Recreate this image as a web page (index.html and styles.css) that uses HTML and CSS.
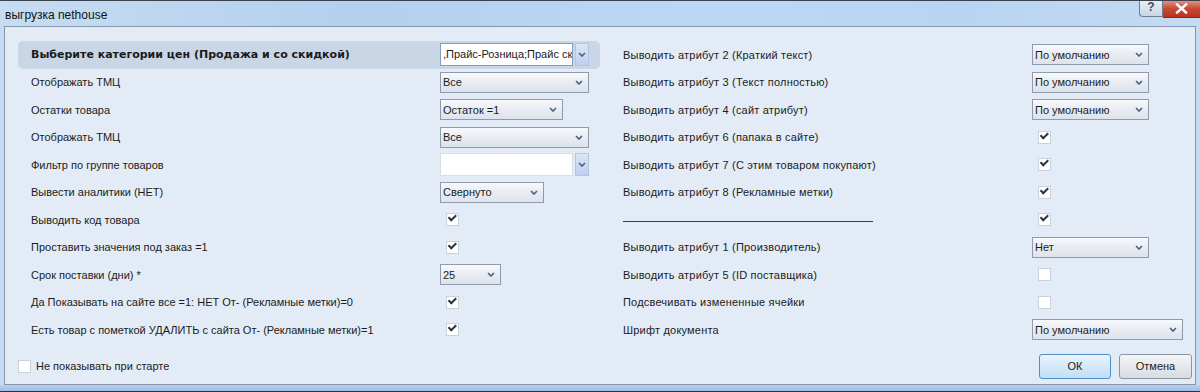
FILE: index.html
```html
<!DOCTYPE html>
<html lang="ru">
<head>
  <meta charset="UTF-8">
  <title>выгрузка nethouse</title>
  <link rel="stylesheet" href="styles.css">
</head>
<body>

<div class="window">
  <div class="titlebar">
    <span class="title">выгрузка nethouse</span>
    <div class="caption-btns">
      <div class="cap-help">?</div>
      <div class="cap-close">
        <svg width="13" height="11" viewBox="0 0 13 11"><path d="M2 1.5 L11 9.5 M11 1.5 L2 9.5" stroke="#fff" stroke-width="2.4" stroke-linecap="square"/></svg>
      </div>
    </div>
  </div>

  <div class="client">
    <div class="columns">
      <!-- левая колонка -->
      <div class="col col-left">
        <div class="row row-active">
          <span class="label bold">Выберите категории цен (Продажа и со скидкой)</span>
          <div class="combo-edit w149">
            <div class="edit">,Прайс-Розница;Прайс ск</div>
            <div class="drop"><svg width="8" height="5" viewBox="0 0 8 5"><path d="M1 1 L4 4 L7 1" fill="none" stroke="#4a5d82" stroke-width="1.6"/></svg></div>
          </div>
        </div>
        <div class="row">
          <span class="label">Отображать ТМЦ</span>
          <div class="select w149"><span>Все</span><svg width="8" height="5" viewBox="0 0 8 5"><path d="M1 1 L4 4 L7 1" fill="none" stroke="#4a5d82" stroke-width="1.6"/></svg></div>
        </div>
        <div class="row">
          <span class="label">Остатки товара</span>
          <div class="select w123"><span>Остаток =1</span><svg width="8" height="5" viewBox="0 0 8 5"><path d="M1 1 L4 4 L7 1" fill="none" stroke="#4a5d82" stroke-width="1.6"/></svg></div>
        </div>
        <div class="row">
          <span class="label">Отображать ТМЦ</span>
          <div class="select w149"><span>Все</span><svg width="8" height="5" viewBox="0 0 8 5"><path d="M1 1 L4 4 L7 1" fill="none" stroke="#4a5d82" stroke-width="1.6"/></svg></div>
        </div>
        <div class="row">
          <span class="label">Фильтр по группе товаров</span>
          <div class="combo-edit w149">
            <div class="edit plain"></div>
            <div class="drop"><svg width="8" height="5" viewBox="0 0 8 5"><path d="M1 1 L4 4 L7 1" fill="none" stroke="#4a5d82" stroke-width="1.6"/></svg></div>
          </div>
        </div>
        <div class="row">
          <span class="label">Вывести аналитики (НЕТ)</span>
          <div class="select w104"><span>Свернуто</span><svg width="8" height="5" viewBox="0 0 8 5"><path d="M1 1 L4 4 L7 1" fill="none" stroke="#4a5d82" stroke-width="1.6"/></svg></div>
        </div>
        <div class="row">
          <span class="label">Выводить код товара</span>
          <div class="check on"></div>
        </div>
        <div class="row">
          <span class="label">Проставить значения под заказ =1</span>
          <div class="check on"></div>
        </div>
        <div class="row">
          <span class="label">Срок поставки (дни) *</span>
          <div class="select w61"><span>25</span><svg width="8" height="5" viewBox="0 0 8 5"><path d="M1 1 L4 4 L7 1" fill="none" stroke="#4a5d82" stroke-width="1.6"/></svg></div>
        </div>
        <div class="row">
          <span class="label">Да Показывать на сайте все =1: НЕТ От- (Рекламные метки)=0</span>
          <div class="check on"></div>
        </div>
        <div class="row">
          <span class="label">Есть товар с пометкой УДАЛИТЬ с сайта От- (Рекламные метки)=1</span>
          <div class="check on"></div>
        </div>
      </div>

      <!-- правая колонка -->
      <div class="col col-right">
        <div class="row">
          <span class="label">Выводить атрибут 2 (Краткий текст)</span>
          <div class="select w117"><span>По умолчанию</span><svg width="8" height="5" viewBox="0 0 8 5"><path d="M1 1 L4 4 L7 1" fill="none" stroke="#4a5d82" stroke-width="1.6"/></svg></div>
        </div>
        <div class="row">
          <span class="label">Выводить атрибут 3 (Текст полностью)</span>
          <div class="select w117"><span>По умолчанию</span><svg width="8" height="5" viewBox="0 0 8 5"><path d="M1 1 L4 4 L7 1" fill="none" stroke="#4a5d82" stroke-width="1.6"/></svg></div>
        </div>
        <div class="row">
          <span class="label">Выводить атрибут 4 (сайт атрибут)</span>
          <div class="select w117"><span>По умолчанию</span><svg width="8" height="5" viewBox="0 0 8 5"><path d="M1 1 L4 4 L7 1" fill="none" stroke="#4a5d82" stroke-width="1.6"/></svg></div>
        </div>
        <div class="row">
          <span class="label">Выводить атрибут 6 (папака в сайте)</span>
          <div class="check on"></div>
        </div>
        <div class="row">
          <span class="label">Выводить атрибут 7 (С этим товаром покупают)</span>
          <div class="check on"></div>
        </div>
        <div class="row">
          <span class="label">Выводить атрибут 8 (Рекламные метки)</span>
          <div class="check on"></div>
        </div>
        <div class="row">
          <span class="label"><span class="sep"></span></span>
          <div class="check on"></div>
        </div>
        <div class="row">
          <span class="label">Выводить атрибут 1 (Производитель)</span>
          <div class="select w117"><span>Нет</span><svg width="8" height="5" viewBox="0 0 8 5"><path d="M1 1 L4 4 L7 1" fill="none" stroke="#4a5d82" stroke-width="1.6"/></svg></div>
        </div>
        <div class="row">
          <span class="label">Выводить атрибут 5 (ID поставщика)</span>
          <div class="check"></div>
        </div>
        <div class="row">
          <span class="label">Подсвечивать измененные ячейки</span>
          <div class="check"></div>
        </div>
        <div class="row">
          <span class="label">Шрифт документа</span>
          <div class="select w151"><span>По умолчанию</span><svg width="8" height="5" viewBox="0 0 8 5"><path d="M1 1 L4 4 L7 1" fill="none" stroke="#4a5d82" stroke-width="1.6"/></svg></div>
        </div>
      </div>
    </div>

    <div class="footer">
      <label class="startup"><span class="check"></span>Не показывать при старте</label>
      <div class="buttons">
        <div class="btn btn-ok">ОК</div>
        <div class="btn">Отмена</div>
      </div>
    </div>
  </div>
  <div class="frame-bottom"></div>
</div>

</body>
</html>
```

FILE: styles.css
```css
body { margin: 0; background: #bcd6f3; font-family: "Liberation Sans", Arial, sans-serif; font-size: 11px; color: #1b1b1b; }

.window { width: 1200px; height: 392px; display: flex; flex-direction: column; overflow: hidden;
  background: linear-gradient(90deg, #c6dcf2 0%, #b3d0ef 30%, #bcd8f6 60%, #b8d4f2 80%, #c4dbf3 100%);
  border-top: 1px solid #3a4250; box-sizing: border-box; }

.titlebar { height: 25px; display: flex; align-items: flex-start; justify-content: space-between; flex-shrink: 0; }
.title { font-size: 12px; color: #111; padding: 7px 0 0 5px; }
.caption-btns { display: flex; }
.cap-help { width: 22px; height: 16px; margin-top: -1px; border: 1px solid #6f7d90; border-top: none; border-radius: 0 0 0 4px;
  background: linear-gradient(#e9f0f8, #c9d6e5); font-size: 12px; font-weight: bold; color: #3c4a5e; text-align: center; line-height: 15px; }
.cap-close { width: 37px; height: 17px; margin-top: -1px; background: linear-gradient(#e49a8c, #c94a35 50%, #b8321d);
  border-bottom: 1px solid #7a2a1f; display: flex; align-items: center; justify-content: center; }

.client { flex: 1; margin: 0 4px; border: 1px solid #8796ab; background: #e3ecf6; display: flex; flex-direction: column;
  padding: 14px 0 0 13px; }

.columns { display: flex; }
.col { display: flex; flex-direction: column; }
.col-left { width: 582px; }
.col-right { margin-left: 23px; }

.row { height: 27.5px; display: flex; align-items: center; }
.col-left .row { padding-left: 13px; }
.row-active { background: #c9d6e6; border-radius: 5px; }
.label { width: 409px; flex-shrink: 0; white-space: nowrap; }
.col-right .label { letter-spacing: 0.2px; }
.bold { font-family: "DejaVu Sans", sans-serif; font-weight: bold; font-size: 11px; }
.sep { display: block; width: 250px; border-top: 1px solid #3b3b3b; margin-top: 4px; }

.select { height: 21px; box-sizing: border-box; border: 1px solid #8f9aaa; display: flex; align-items: center; justify-content: space-between;
  padding: 0 5px 0 2px; background: linear-gradient(#f7f9fc, #e9edf3 45%, #dde3ec); }
.w149 { width: 149px; }
.w123 { width: 123px; }
.w104 { width: 104px; }
.w61 { width: 61px; }
.w117 { width: 117px; }
.w151 { width: 151px; }

.combo-edit { display: flex; height: 23px; }
.edit { flex: 1; box-sizing: border-box; border: 1px solid #7f9db9; background: #fff; padding: 0 2px; line-height: 21px; overflow: hidden; white-space: nowrap; }
.edit.plain { border-color: #d6dde8; }
.drop { width: 14px; margin-left: 2px; box-sizing: border-box; border: 1px solid #b3c6e0; background: linear-gradient(#dbe6f6, #bcd0ee);
  display: flex; align-items: center; justify-content: center; }

.check { width: 13px; height: 13px; box-sizing: border-box; border: 1px solid #c8d2de; background: #fff; margin-left: 6px; position: relative; }
.check.on::after { content: ""; position: absolute; left: 2px; top: 1px; width: 6px; height: 3px;
  border-left: 2px solid #2c3440; border-bottom: 2px solid #2c3440; transform: rotate(-45deg); transform-origin: 3px 3px; }

.footer { display: flex; justify-content: space-between; align-items: flex-start; margin-top: 10px; padding-right: 3px; }
.startup { display: flex; align-items: center; margin-top: 6px; }
.startup .check { margin: 0 5px 0 0; }
.buttons { display: flex; gap: 8px; }
.btn { width: 73px; height: 25px; box-sizing: border-box; border: 1px solid #8a95a4; border-radius: 3px; display: flex; align-items: center; justify-content: center;
  background: linear-gradient(#f4f5f7, #e5e8ec 50%, #d8dde3); }
.btn-ok { width: 72px; border-color: #4f8fc9; background: linear-gradient(#e9f4fd, #d5e9fa 50%, #c2def7); }

.frame-bottom { height: 6px; flex-shrink: 0; background: linear-gradient(#b6d2f0, #9fbde0); border-bottom: 1px solid #2d3440; }
```
